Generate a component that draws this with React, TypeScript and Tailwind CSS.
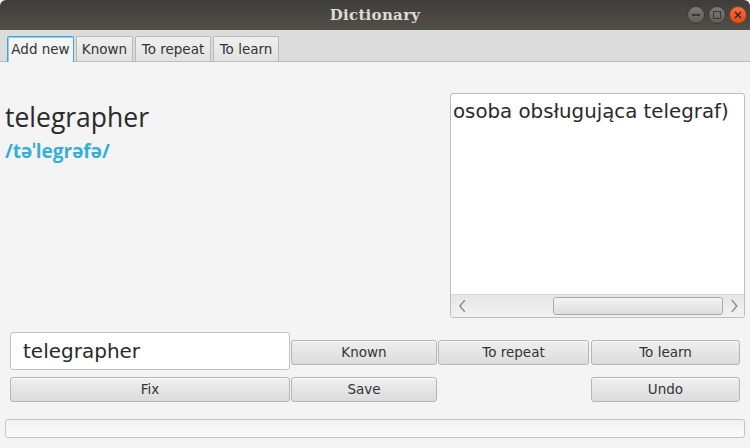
import React from "react";

const sans = { fontFamily: '"DejaVu Sans", "Liberation Sans", sans-serif' };

function Btn({ label, className = "" }: { label: string; className?: string }) {
  return (
    <div
      className={`h-[25px] flex items-center justify-center rounded-[3px] border border-[#b5b5b5] bg-gradient-to-b from-[#efefef] to-[#dcdcdc] text-[13.5px] text-[#333] shadow-[inset_0_1px_0_#fafafa] ${className}`}
      style={sans}
    >
      {label}
    </div>
  );
}

function Tab({ label, active = false, className = "" }: { label: string; active?: boolean; className?: string }) {
  return (
    <div
      className={
        (active
          ? "h-[26px] flex items-center justify-center border border-b-0 border-[#3ea5d6] bg-[#f4f4f4] rounded-t-[2px] text-[13.5px] text-[#333] shadow-[inset_1px_1px_0_#8fd0ee] "
          : "h-[25px] flex items-center justify-center border border-b-0 border-[#b8b8b8] bg-gradient-to-b from-[#f0f0f0] to-[#e2e2e2] rounded-t-[2px] text-[13.5px] text-[#333] ") +
        className
      }
      style={sans}
    >
      {label}
    </div>
  );
}

export default function App() {
  return (
    <div className="w-[750px] h-[448px] overflow-hidden bg-[#f4f4f4] flex flex-col">
      {/* Title bar */}
      <div className="h-[30px] shrink-0 relative flex items-center justify-center bg-gradient-to-b from-[#3e3d39] to-[#53504a] rounded-t-[6px]">
        <span
          className="text-[15px] font-bold text-[#dfdbd2] tracking-[0.3px]"
          style={{ fontFamily: '"DejaVu Serif", "Liberation Serif", serif' }}
        >
          Dictionary
        </span>
        <div className="absolute right-[3px] top-[6px] flex gap-[3px]">
          <div className="w-[18px] h-[18px] rounded-full bg-gradient-to-b from-[#7b7a75] to-[#5e5d58] border border-[#3a3935] flex items-center justify-center">
            <div className="w-[8px] h-[2px] bg-[#3a3935]" />
          </div>
          <div className="w-[18px] h-[18px] rounded-full bg-gradient-to-b from-[#7b7a75] to-[#5e5d58] border border-[#3a3935] flex items-center justify-center">
            <div className="w-[8px] h-[8px] border-[1.5px] border-[#3a3935]" />
          </div>
          <div className="w-[18px] h-[18px] rounded-full bg-gradient-to-b from-[#f0703f] to-[#df4b16] border border-[#8a3a1a] flex items-center justify-center">
            <svg width="8" height="8" viewBox="0 0 8 8">
              <path d="M1 1 L7 7 M7 1 L1 7" stroke="#4a2010" strokeWidth="1.5" />
            </svg>
          </div>
        </div>
      </div>

      {/* Tab bar */}
      <div className="h-[32px] shrink-0 bg-[#dcdcdc] border-b border-[#bdbdbd] flex items-end gap-[2px] pl-[7px] relative">
        <div className="-mb-px"><Tab label="Add new" active className="w-[67px]" /></div>
        <Tab label="Known" className="w-[57px]" />
        <Tab label="To repeat" className="w-[76px]" />
        <Tab label="To learn" className="w-[66px]" />
      </div>

      {/* Content */}
      <div className="flex-1 flex flex-col">
        <div className="flex pt-[31px] pr-[5px]">
          <div className="flex-1 pl-[5px] pt-[8px]">
            <div
              className="text-[26.5px] leading-[33px] text-[#2a2a2a]"
              style={{ fontFamily: '"Open Sans", "Noto Sans", sans-serif' }}
            >
              telegrapher
            </div>
            <div
              className="text-[19px] leading-[25px] font-bold text-[#36afd8] mt-[5px]"
              style={{ fontFamily: '"Open Sans", "Noto Sans", sans-serif' }}
            >
              /təˈlegrəfə/
            </div>
          </div>
          <div className="w-[295px] h-[225px] bg-white border border-[#bcbcbc] rounded-[3px] flex flex-col overflow-hidden">
            <div className="flex-1 pl-[2px] pt-[5px] text-[19.8px] leading-[26px] text-[#2a2a2a] whitespace-nowrap" style={sans}>
              osoba obsługująca telegraf)
            </div>
            <div className="h-[23px] bg-gradient-to-b from-[#e6e6e6] to-[#f2f2f2] border-t border-[#dadada] flex items-center">
              <svg width="20" height="20" viewBox="0 0 20 20" className="ml-[2px]">
                <path d="M12 4 L7 10 L12 16" stroke="#8a8a8a" strokeWidth="1.5" fill="none" />
              </svg>
              <div className="ml-[80px] w-[174px] h-[18px] rounded-[3px] border border-[#a9a9a9] bg-gradient-to-b from-[#f4f4f4] to-[#dedede]" />
              <svg width="20" height="20" viewBox="0 0 20 20" className="ml-[1px]">
                <path d="M8 4 L13 10 L8 16" stroke="#8a8a8a" strokeWidth="1.5" fill="none" />
              </svg>
            </div>
          </div>
        </div>

        {/* Controls */}
        <div className="mt-[14px] pl-[10px] grid grid-cols-[280px_146px_151px_150px] gap-x-px gap-y-[7px] items-center">
          <div className="h-[38px] bg-white border border-[#c3c3c3] rounded-[3px] flex items-center pl-[12px] text-[20px] text-[#2a2a2a]" style={sans}>
            telegrapher
          </div>
          <Btn label="Known" className="mt-[2px]" />
          <Btn label="To repeat" className="mt-[2px]" />
          <Btn label="To learn" className="mt-[2px] ml-px" />
          <Btn label="Fix" />
          <Btn label="Save" />
          <div />
          <Btn label="Undo" className="ml-px" />
        </div>

        <div className="mt-[17px] mx-[5px] h-[19px] rounded-[3px] border border-[#c4c4c4] bg-gradient-to-b from-[#f1f1f1] to-[#fbfbfb]" />
      </div>
    </div>
  );
}
